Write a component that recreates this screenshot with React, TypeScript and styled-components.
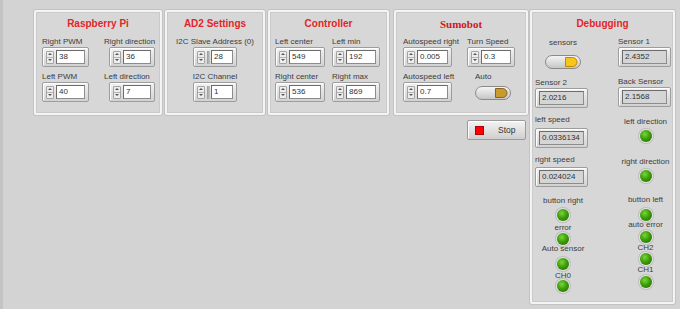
import React from "react"
import styled, { createGlobalStyle } from "styled-components"

const GlobalStyle = createGlobalStyle`
  html, body {
    margin: 0;
    padding: 0;
  }
  body {
    background: #d3d3d3;
    font-family: "Liberation Sans", Arial, sans-serif;
    color: #3a3a3a;
  }
`

const Page = styled.div`
  display: flex;
  align-items: flex-start;
  height: 309px;
  box-sizing: border-box;
  padding: 10px 0 0 31px;
  border-left: 3px solid #c4c4c4;
`

const Panel = styled.section<{ $w: number; $h: number; $mr?: number }>`
  width: ${p => p.$w}px;
  height: ${p => p.$h}px;
  margin-right: ${p => p.$mr ?? 3}px;
  box-sizing: border-box;
  background: #d7d7d7;
  border: 2px solid #f4f4f4;
  border-radius: 2px;
  box-shadow: 0 0 0 1px #c3c3c3, inset 0 0 0 1px #cacaca;
  padding-top: 5px;
  flex-shrink: 0;
`

const Title = styled.h2<{ $serif?: boolean }>`
  margin: 0;
  text-align: center;
  line-height: 14px;
  font-weight: bold;
  font-family: ${p => (p.$serif ? `"Liberation Serif", "Times New Roman", serif` : `"Liberation Sans", Arial, sans-serif`)};
  font-size: ${p => (p.$serif ? 11 : 10)}px;
  color: ${p => (p.$serif ? "#d3141c" : "#e2252b")};
`

const FieldGrid = styled.div<{ $cols: string; $pl: number }>`
  display: grid;
  grid-template-columns: ${p => p.$cols};
  row-gap: 4px;
  padding-left: ${p => p.$pl}px;
  margin-top: 5px;
`

const Field = styled.div<{ $center?: boolean; $pl?: number }>`
  display: flex;
  flex-direction: column;
  align-items: ${p => (p.$center ? "center" : "flex-start")};
  padding-left: ${p => p.$pl ?? 0}px;
`

const Label = styled.span<{ $indent?: number }>`
  font-size: 8px;
  line-height: 11px;
  white-space: nowrap;
  color: #3c3c3c;
  margin-left: ${p => p.$indent ?? 0}px;
`

const Frame = styled.div<{ $w: number; $indent?: number; $mt?: number }>`
  width: ${p => p.$w}px;
  height: 20px;
  margin-left: ${p => p.$indent ?? 0}px;
  margin-top: ${p => p.$mt ?? 0}px;
  box-sizing: border-box;
  display: flex;
  align-items: center;
  gap: 2px;
  padding: 0 3px;
  border: 1px solid #9d9d9d;
  border-radius: 2px;
  background: linear-gradient(#f2f2f2, #d2d2d2);
  box-shadow: inset 1px 1px 0 #ffffff;
  flex-shrink: 0;
`

const Spinner = styled.div`
  width: 8px;
  height: 13px;
  box-sizing: border-box;
  border: 1px solid #a4a4a4;
  border-radius: 1px;
  background: #ededed;
  display: flex;
  flex-direction: column;
  flex-shrink: 0;
`

const Arrow = styled.div<{ $down?: boolean }>`
  flex: 1;
  display: flex;
  align-items: center;
  justify-content: center;
  border-top: ${p => (p.$down ? "1px solid #b4b4b4" : "none")};

  &::after {
    content: "";
    border-left: 2px solid transparent;
    border-right: 2px solid transparent;
    ${p => (p.$down ? "border-top: 2px solid #555;" : "border-bottom: 2px solid #555;")}
  }
`

const Radix = styled.div`
  width: 3px;
  height: 13px;
  background: linear-gradient(90deg, #9a9a9a, #c8c8c8);
  margin-right: -1px;
  flex-shrink: 0;
`

const Entry = styled.div<{ $gray?: boolean }>`
  flex: 1;
  height: 14px;
  box-sizing: border-box;
  background: ${p => (p.$gray ? "#d5d5d5" : "#ffffff")};
  border: 1px solid #8c8c8c;
  border-top-color: #6c6c6c;
  border-left-color: #6c6c6c;
  font-size: 8px;
  line-height: 12px;
  padding-left: 2px;
  color: #333;
  white-space: nowrap;
  overflow: hidden;
`

const SumoColumn = styled.div`
  display: flex;
  flex-direction: column;
  align-items: flex-end;
  margin-right: 2px;
`

const StopButton = styled.button`
  width: 59px;
  height: 20px;
  margin: 5px 2px 0 0;
  box-sizing: border-box;
  display: flex;
  align-items: center;
  padding: 0 0 0 7px;
  border: 1px solid #9a9a9a;
  border-radius: 2px;
  background: linear-gradient(#f3f3f3, #cfcfcf);
  box-shadow: inset 1px 1px 0 #ffffff;
  font-family: "Liberation Sans", Arial, sans-serif;
  font-size: 8.5px;
  color: #333;
`

const StopMark = styled.span`
  width: 9px;
  height: 9px;
  background: #ff0000;
  border: 1px solid #b00000;
  box-sizing: border-box;
  margin-right: 14px;
`

const DebugColumns = styled.div`
  display: flex;
  padding: 2px 0 0 3px;
`

const DebugCol = styled.div<{ $w: number; $mr?: number }>`
  width: ${p => p.$w}px;
  margin-right: ${p => p.$mr ?? 0}px;
  display: flex;
  flex-direction: column;
  align-items: center;
`

const DLabel = styled.span<{ $mt?: number; $left?: boolean }>`
  font-size: 8px;
  line-height: 10px;
  white-space: nowrap;
  color: #3c3c3c;
  margin-top: ${p => p.$mt ?? 0}px;
  align-self: ${p => (p.$left ? "flex-start" : "center")};
`

const IndicatorFrame = styled(Frame)`
  align-self: flex-start;
  padding: 0 3px;
`

const Led = styled.div<{ $mt?: number }>`
  width: 12px;
  height: 12px;
  border-radius: 50%;
  margin-top: ${p => p.$mt ?? 0}px;
  background: radial-gradient(circle at 40% 35%, #78d836 0%, #3d9e0b 45%, #1f6500 100%);
  box-shadow: 0 0 0 1px #e4e4e4, 0 0 0 2px #bcbcbc;
  flex-shrink: 0;
`

const ToggleBox = styled.div<{ $mt?: number; $ml?: number }>`
  width: 36px;
  height: 14px;
  margin-top: ${p => p.$mt ?? 0}px;
  margin-left: ${p => p.$ml ?? 0}px;
  line-height: 0;
`

type ToggleProps = { id: string; knob: string; edge: string; mt?: number; ml?: number }

const Toggle: React.FC<ToggleProps> = ({ id, knob, edge, mt, ml }) => (
  <ToggleBox $mt={mt} $ml={ml}>
    <svg width="36" height="14" viewBox="0 0 36 14">
      <defs>
        <linearGradient id={id} x1="0" y1="0" x2="0" y2="1">
          <stop offset="0" stopColor="#f6f6f6" />
          <stop offset="1" stopColor="#c4c4c4" />
        </linearGradient>
      </defs>
      <rect x="0.5" y="0.5" width="35" height="13" rx="6.5" fill={`url(#${id})`} stroke="#8a8a8a" />
      <path d="M20.5 2.5 h7 a4.5 4.5 0 0 1 0 9 h-7 z" fill={knob} stroke={edge} />
    </svg>
  </ToggleBox>
)

type NumProps = { label: string; value: string; w: number; indent?: number; radix?: boolean; center?: boolean }

const Numeric: React.FC<NumProps> = ({ label, value, w, indent, radix, center }) => (
  <Field $center={center}>
    <Label>{label}</Label>
    <Frame $w={w} $indent={indent}>
      <Spinner>
        <Arrow />
        <Arrow $down />
      </Spinner>
      {radix && <Radix />}
      <Entry>{value}</Entry>
    </Frame>
  </Field>
)

type IndProps = { label: string; value: string; mt: number; fmt?: number }

const Indicator: React.FC<IndProps> = ({ label, value, mt, fmt }) => (
  <>
    <DLabel $left $mt={mt}>{label}</DLabel>
    <IndicatorFrame $w={53} $mt={fmt}>
      <Entry $gray>{value}</Entry>
    </IndicatorFrame>
  </>
)

const App: React.FC = () => {
  return (
    <>
      <GlobalStyle />
      <Page>
        <Panel $w={128} $h={105}>
          <Title>Raspberry Pi</Title>
          <FieldGrid $cols="62px 1fr" $pl={6}>
            <Numeric label="Right PWM" value="38" w={47} />
            <Numeric label="Right direction" value="36" w={46} indent={5} />
            <Numeric label="Left PWM" value="40" w={47} />
            <Numeric label="Left direction" value="7" w={46} indent={5} />
          </FieldGrid>
        </Panel>

        <Panel $w={100} $h={105}>
          <Title>AD2 Settings</Title>
          <FieldGrid $cols="1fr" $pl={0}>
            <Numeric label="I2C Slave Address (0)" value="28" w={44} radix center />
            <Numeric label="I2C Channel" value="1" w={44} radix center />
          </FieldGrid>
        </Panel>

        <Panel $w={121} $h={105} $mr={5}>
          <Title>Controller</Title>
          <FieldGrid $cols="57px 1fr" $pl={5}>
            <Numeric label="Left center" value="549" w={50} />
            <Numeric label="Left min" value="192" w={48} />
            <Numeric label="Right center" value="536" w={50} />
            <Numeric label="Right max" value="869" w={48} />
          </FieldGrid>
        </Panel>

        <SumoColumn>
          <Panel $w={134} $h={105} $mr={0}>
            <Title $serif>Sumobot</Title>
            <FieldGrid $cols="64px 1fr" $pl={7}>
              <Numeric label="Autospeed right" value="0.005" w={49} />
              <Numeric label="Turn Speed" value="0.3" w={48} />
              <Numeric label="Autospeed left" value="0.7" w={49} />
              <Field $pl={8}>
                <Label>Auto</Label>
                <Toggle id="autoGrad" knob="#c99a2e" edge="#86611a" mt={4} />
              </Field>
            </FieldGrid>
          </Panel>
          <StopButton>
            <StopMark />
            Stop
          </StopButton>
        </SumoColumn>

        <Panel $w={145} $h={294} $mr={0}>
          <Title>Debugging</Title>
          <DebugColumns>
            <DebugCol $w={56} $mr={27}>
              <DLabel $mt={5}>sensors</DLabel>
              <Toggle id="sensGrad" knob="#f6c61a" edge="#c08700" mt={7} />
              <Indicator label="Sensor 2" value="2.0216" mt={9} />
              <Indicator label="left speed" value="0.0336134" mt={7} fmt={3} />
              <Indicator label="right speed" value="0.024024" mt={7} fmt={2} />
              <DLabel $mt={9}>button right</DLabel>
              <Led $mt={3} />
              <DLabel $mt={2}>error</DLabel>
              <Led $mt={0} />
              <DLabel $mt={-1}>Auto sensor</DLabel>
              <Led $mt={4} />
              <DLabel $mt={1}>CH0</DLabel>
              <Led $mt={-1} />
            </DebugCol>
            <DebugCol $w={55}>
              <Indicator label="Sensor 1" value="2.4352" mt={4} />
              <Indicator label="Back Sensor" value="2.1568" mt={10} />
              <DLabel $mt={10}>left direction</DLabel>
              <Led $mt={3} />
              <DLabel $mt={15}>right direction</DLabel>
              <Led $mt={3} />
              <DLabel $mt={13}>button left</DLabel>
              <Led $mt={4} />
              <DLabel $mt={-1}>auto error</DLabel>
              <Led $mt={1} />
              <DLabel $mt={0}>CH2</DLabel>
              <Led $mt={0} />
              <DLabel $mt={0}>CH1</DLabel>
              <Led $mt={1} />
            </DebugCol>
          </DebugColumns>
        </Panel>
      </Page>
    </>
  )
}

export default App
